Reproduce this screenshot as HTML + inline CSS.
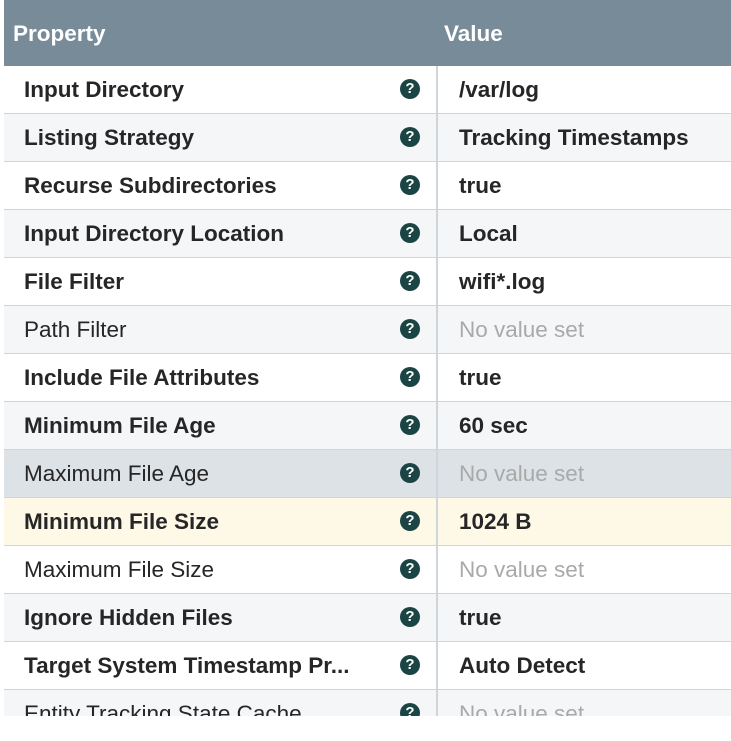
<!DOCTYPE html><html><head><style>
body{margin:0;width:731px;height:741px;background:#fff;overflow:hidden;font-family:"Liberation Sans",sans-serif;}
.wrap{position:absolute;left:4px;top:0;width:727px;height:716px;overflow:hidden;}
.hd{height:66px;background:#778c98;color:#fff;font-weight:bold;font-size:22.5px;position:relative;}
.hd span{position:absolute;top:21px;}
.row{height:47px;border-bottom:1px solid #cfd6db;position:relative;font-size:22.5px;color:#262626;}
.row.g{background:#f4f6f8}.row.h{background:#dde2e6}.row.y{background:#fdf9e6}
.n{position:absolute;left:20px;top:11px;width:338px;white-space:nowrap;overflow:hidden;text-overflow:ellipsis}
.b{font-weight:bold}
.q{position:absolute;left:396px;top:13px;width:20px;height:20px;border-radius:50%;background:#1b4545;color:#fff;font-size:15px;font-weight:bold;text-align:center;line-height:20px}
.d{position:absolute;left:432px;top:0;width:2px;height:48px;background:#cfd6db}
.v{position:absolute;left:455px;top:11px;white-space:nowrap}
.nv{color:#a9a9a9}
</style></head><body><div class="wrap">
<div class="hd"><span style="left:9px">Property</span><span style="left:440px">Value</span></div>
<div class="row"><div class="n b">Input Directory</div><div class="q">?</div><div class="d"></div><div class="v b">/var/log</div></div>
<div class="row g"><div class="n b">Listing Strategy</div><div class="q">?</div><div class="d"></div><div class="v b">Tracking Timestamps</div></div>
<div class="row"><div class="n b">Recurse Subdirectories</div><div class="q">?</div><div class="d"></div><div class="v b">true</div></div>
<div class="row g"><div class="n b">Input Directory Location</div><div class="q">?</div><div class="d"></div><div class="v b">Local</div></div>
<div class="row"><div class="n b">File Filter</div><div class="q">?</div><div class="d"></div><div class="v b">wifi*.log</div></div>
<div class="row g"><div class="n">Path Filter</div><div class="q">?</div><div class="d"></div><div class="v nv">No value set</div></div>
<div class="row"><div class="n b">Include File Attributes</div><div class="q">?</div><div class="d"></div><div class="v b">true</div></div>
<div class="row g"><div class="n b">Minimum File Age</div><div class="q">?</div><div class="d"></div><div class="v b">60 sec</div></div>
<div class="row h"><div class="n">Maximum File Age</div><div class="q">?</div><div class="d"></div><div class="v nv">No value set</div></div>
<div class="row y"><div class="n b">Minimum File Size</div><div class="q">?</div><div class="d"></div><div class="v b">1024 B</div></div>
<div class="row"><div class="n">Maximum File Size</div><div class="q">?</div><div class="d"></div><div class="v nv">No value set</div></div>
<div class="row g"><div class="n b">Ignore Hidden Files</div><div class="q">?</div><div class="d"></div><div class="v b">true</div></div>
<div class="row"><div class="n b">Target System Timestamp Pr...</div><div class="q">?</div><div class="d"></div><div class="v b">Auto Detect</div></div>
<div class="row g"><div class="n">Entity Tracking State Cache</div><div class="q">?</div><div class="d"></div><div class="v nv">No value set</div></div>
</div></body></html>
